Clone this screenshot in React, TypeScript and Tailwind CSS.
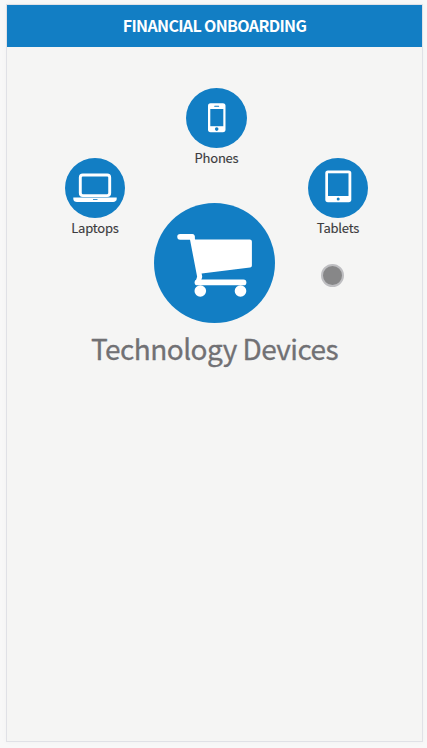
import type { ReactNode } from 'react';

function Category({ label, children }: { label: string; children: ReactNode }) {
  return (
    <div className="flex w-full flex-col items-center">
      <div className="h-[60px] w-full rounded-[50%] bg-[#127ec4]">{children}</div>
      <span className="h-5 whitespace-nowrap text-[13px] font-normal leading-5 tracking-[-0.2px] text-[#3c3c3e] [-webkit-text-stroke:0.15px]">{label}</span>
    </div>
  );
}

function LaptopIcon() {
  return (
    <svg viewBox="0 0 60 60" className="h-full w-full" fill="none">
      <rect x="15.3" y="17" width="29.4" height="20.6" rx="2.5" stroke="#fff" strokeWidth="2.9" />
      <path d="M8.3 39.5h43.4v1.5c0 1.8-1.5 2.9-3.5 2.9H12c-2 0-3.7-1-3.7-2.9z" fill="#fff" />
      <path d="M28 41.5h4.5" stroke="#127ec4" strokeWidth=".8" />
    </svg>
  );
}

function PhoneIcon() {
  return (
    <svg viewBox="0 0 60 60" className="h-full w-full">
      <rect x="21.5" y="15.2" width="17.5" height="29" rx="2.6" fill="#fff" />
      <rect x="23.8" y="21" width="13" height="17.2" fill="#127ec4" />
      <rect x="27.7" y="17.8" width="5" height="1" rx=".5" fill="#127ec4" />
      <circle cx="30.2" cy="41.1" r="1.8" fill="#127ec4" />
    </svg>
  );
}

function TabletIcon() {
  return (
    <svg viewBox="0 0 60 60" className="h-full w-full">
      <rect x="17.3" y="12.5" width="26" height="31.7" rx="2.6" fill="#fff" />
      <rect x="20" y="15.3" width="20.5" height="22.7" fill="#127ec4" />
      <circle cx="30.2" cy="41" r="1.5" fill="#127ec4" />
    </svg>
  );
}

function CartIcon() {
  return (
    <svg viewBox="0 0 120 120" className="h-full w-full" stroke="#fff" strokeLinecap="round" strokeLinejoin="round">
      <path d="M25.6 33.8h11.8" strokeWidth="5.7" fill="none" />
      <path d="M37.5 33.8l7.7 40-1.7 5.5" strokeWidth="5" fill="none" />
      <path d="M40 38.5h55.3v24L47 68.5z" strokeWidth="4.2" fill="#fff" />
      <path d="M43 79.4h46" strokeWidth="5.8" fill="none" />
      <circle cx="45.8" cy="88" r="5.8" fill="#fff" stroke="none" />
      <circle cx="86" cy="88" r="5.8" fill="#fff" stroke="none" />
    </svg>
  );
}

export default function App() {
  return (
    <div className="relative flex h-[748px] w-[427px] flex-col bg-[#f8f8f8] pl-1.5 pt-1 font-['Noto_Sans_CJK_SC',sans-serif]">
      <main className="flex h-[738px] w-[417px] flex-col border border-[#e0e1e6] bg-[#f5f5f4] shadow-[0_0_6px_rgba(0,0,30,0.03)]">
        <header className="flex h-[42px] shrink-0 items-center justify-center bg-[#127ec4] pb-0.5">
          <h1 className="whitespace-nowrap text-[16px] font-bold leading-5 tracking-[-0.65px] text-white">FINANCIAL ONBOARDING</h1>
        </header>
        <section className="mt-[41px] flex items-start pl-[58px]">
          <div className="mt-[70px] w-[60px]">
            <Category label="Laptops"><LaptopIcon /></Category>
          </div>
          <div className="ml-[29px] flex w-[121px] flex-col items-center">
            <div className="ml-[4px] w-[61px]">
              <Category label="Phones"><PhoneIcon /></Category>
            </div>
            <div className="mt-[35px] h-[120px] w-[121px] rounded-[50%] bg-[#127ec4]"><CartIcon /></div>
          </div>
          <div className="ml-[33px] mt-[70px] w-[60px]">
            <Category label="Tablets"><TabletIcon /></Category>
          </div>
        </section>
        <h2 className="mt-[5px] whitespace-nowrap text-center text-[28px] leading-10 tracking-[-0.55px] text-[#717174] [-webkit-text-stroke:0.3px]">Technology Devices</h2>
      </main>
      <div className="absolute left-[321px] top-[264px] h-[23px] w-[23px] rounded-full border-2 border-[#bebec1] bg-[#878788]" />
    </div>
  );
}
